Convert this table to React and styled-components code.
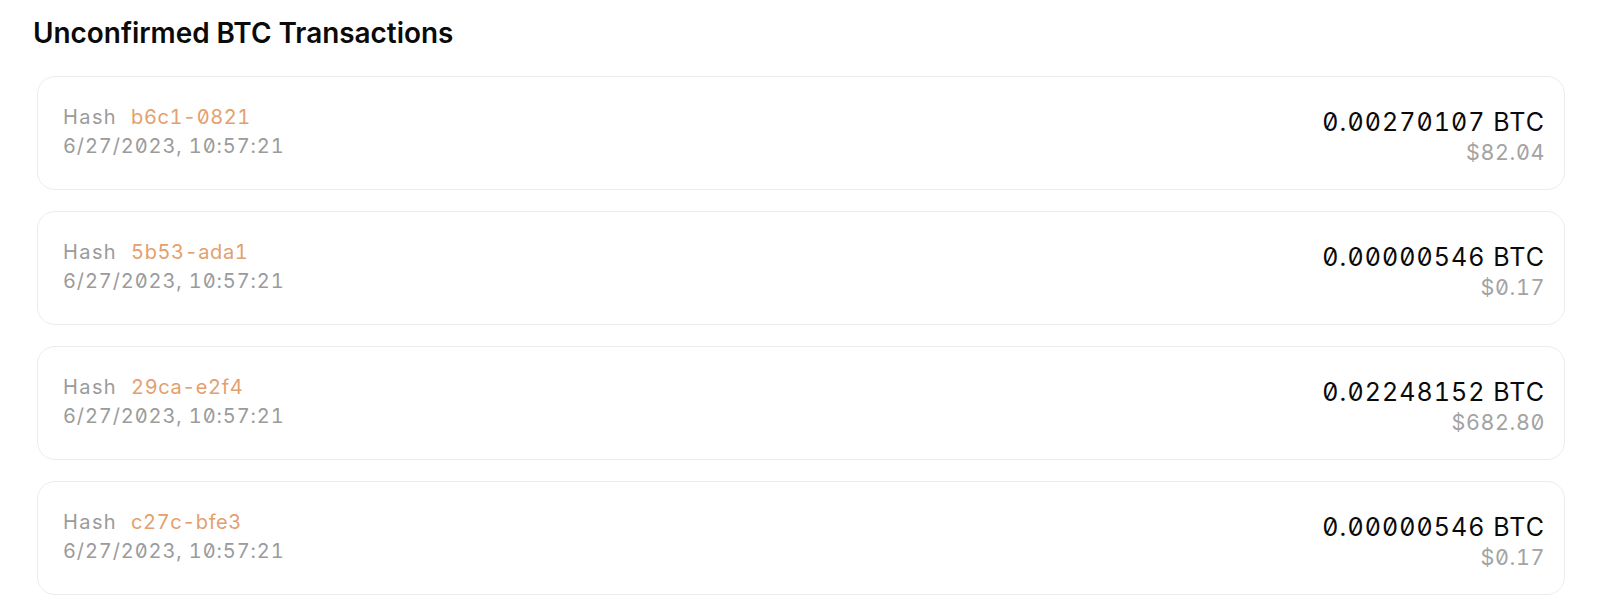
import React from "react";
import styled, { createGlobalStyle } from "styled-components";

const Global = createGlobalStyle`
  html, body { margin: 0; padding: 0; background: #ffffff; }
  body {
    font-family: Inter, "Noto Sans", sans-serif;
    font-feature-settings: "zero" 1, "tnum" 1;
    font-variant-numeric: tabular-nums slashed-zero;
  }
`;

const Page = styled.div`
  padding: 16px 32px 0 33px;
  display: flex;
  flex-direction: column;
`;

const Title = styled.h2`
  margin: 0;
  font-size: 27.9px;
  line-height: 34px;
  font-weight: 600;
  color: #0a0a0a;
  font-feature-settings: normal;
  font-variant-numeric: normal;
`;

const List = styled.div`
  display: flex;
  flex-direction: column;
  gap: 21px;
  margin-top: 26px;
  padding-left: 4px;
  padding-right: 3px;
`;

const Card = styled.div`
  display: flex;
  justify-content: space-between;
  align-items: center;
  height: 114px;
  box-sizing: border-box;
  padding: 0 19px 0 25px;
  border: 1.5px solid #ececec;
  border-radius: 18px;
  background: #fff;
`;

const Info = styled.div`
  display: flex;
  flex-direction: column;
  align-items: flex-start;
  padding-bottom: 3px;
`;

const Amounts = styled.div`
  display: flex;
  flex-direction: column;
  align-items: flex-end;
  padding-top: 4px;
`;

const Line = styled.div`
  font-size: 20px;
  line-height: 29px;
  letter-spacing: 0.9px;
  color: #9b9b9b;
  white-space: nowrap;
`;

const Label = styled.span`
  letter-spacing: 1.4px;
`;

const HashId = styled.span`
  color: #e3a06e;
  margin-left: 14px;
  letter-spacing: 0.6px;
`;

const Btc = styled.div`
  font-size: 25px;
  line-height: 34px;
  letter-spacing: 1.05px;
  color: #0a0a0a;
  white-space: nowrap;
`;

const Usd = styled.div`
  font-size: 21.5px;
  line-height: 27px;
  letter-spacing: 0.6px;
  color: #a3a3a3;
  white-space: nowrap;
`;

const rows = [
  { hash: "b6c1-0821", btc: "0.00270107", usd: "$82.04" },
  { hash: "5b53-ada1", btc: "0.00000546", usd: "$0.17" },
  { hash: "29ca-e2f4", btc: "0.02248152", usd: "$682.80" },
  { hash: "c27c-bfe3", btc: "0.00000546", usd: "$0.17" },
];

export default function App() {
  return (
    <>
      <Global />
      <Page>
        <Title>Unconfirmed BTC Transactions</Title>
        <List>
          {rows.map((r, i) => (
            <Card key={i}>
              <Info>
                <Line>
                  <Label>Hash</Label>
                  <HashId>{r.hash}</HashId>
                </Line>
                <Line>6/27/2023, 10:57:21</Line>
              </Info>
              <Amounts>
                <Btc>{r.btc} BTC</Btc>
                <Usd>{r.usd}</Usd>
              </Amounts>
            </Card>
          ))}
        </List>
      </Page>
    </>
  );
}
